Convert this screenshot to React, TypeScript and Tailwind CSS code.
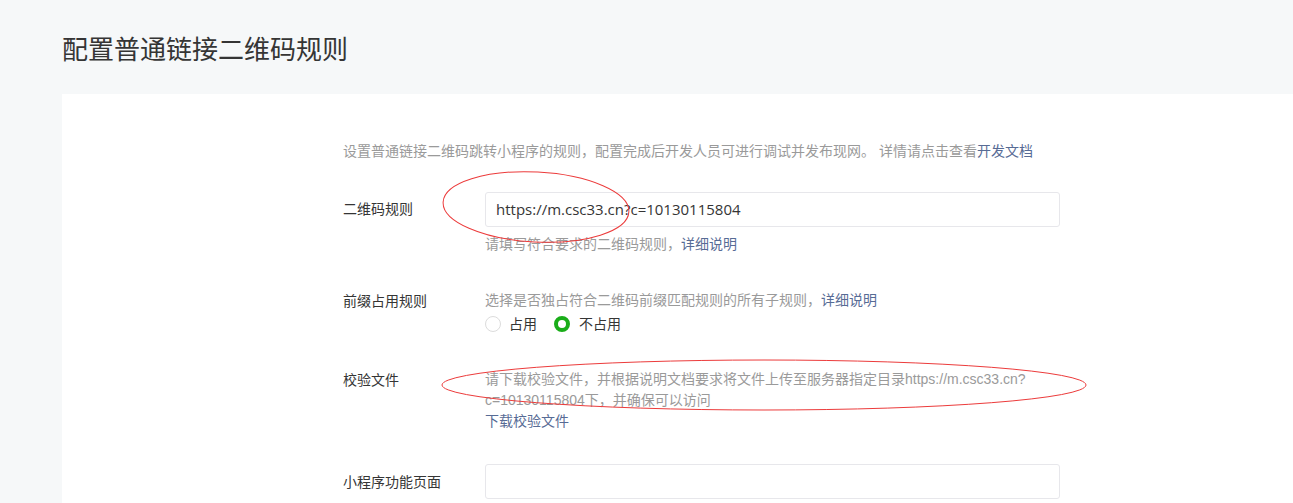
export default function App() {
  const font = { fontFamily: '"Liberation Sans", "Noto Sans CJK SC", sans-serif' };

  return (
    <div className="relative min-h-[503px] w-full overflow-hidden bg-[#f6f8f9]" style={font}>
      <h1 className="pl-[62px] pt-[32px] text-[26px] font-normal leading-[36px] text-[#353535]">
        配置普通链接二维码规则
      </h1>

      <div className="ml-[62px] mt-[26px] min-h-[420px] bg-white pl-[281px] pt-[47px] text-[14px]">
        <p className="leading-[20px] text-[#9a9a9a]">
          设置普通链接二维码跳转小程序的规则，配置完成后开发人员可进行调试并发布现网。 详情请点击查看
          <a className="text-[#576b95]">开发文档</a>
        </p>

        {/* 二维码规则 */}
        <div className="mt-[31px] flex">
          <label className="w-[142px] shrink-0 leading-[35px] text-[#353535]">二维码规则</label>
          <div>
            <div
              className="flex h-[35px] w-[575px] items-center rounded-[3px] border border-[#e7e7eb] px-[10px] text-[15px] text-[#353535]"
              style={{ fontFamily: '"Open Sans", sans-serif' }}
            >
              https://m.csc33.cn?c=10130115804
            </div>
            <p className="mt-[7px] leading-[20px] text-[#9a9a9a]">
              请填写符合要求的二维码规则，<a className="text-[#576b95]">详细说明</a>
            </p>
          </div>
        </div>

        {/* 前缀占用规则 */}
        <div className="mt-[36px] flex">
          <label className="w-[142px] shrink-0 pt-[1px] leading-[20px] text-[#353535]">前缀占用规则</label>
          <div>
            <p className="leading-[20px] text-[#9a9a9a]">
              选择是否独占符合二维码前缀匹配规则的所有子规则，<a className="text-[#576b95]">详细说明</a>
            </p>
            <div className="mt-[4px] flex items-center leading-[20px] text-[#353535]">
              <span className="h-[16px] w-[16px] rounded-full border border-[#dcdcdc]" />
              <span className="ml-[8px]">占用</span>
              <span className="ml-[17px] h-[16px] w-[16px] rounded-full border-[4px] border-[#1aad19]" />
              <span className="ml-[9px]">不占用</span>
            </div>
          </div>
        </div>

        {/* 校验文件 */}
        <div className="mt-[35px] flex">
          <label className="w-[142px] shrink-0 pt-[1px] leading-[21px] text-[#353535]">校验文件</label>
          <div className="leading-[21px]">
            <p className="text-[#9a9a9a]">
              请下载校验文件，并根据说明文档要求将文件上传至服务器指定目录https://m.csc33.cn?
              <br />
              c=10130115804下，并确保可以访问
            </p>
            <a className="text-[#576b95]">下载校验文件</a>
          </div>
        </div>

        {/* 小程序功能页面 */}
        <div className="mt-[32px] flex">
          <label className="w-[142px] shrink-0 pt-[1px] leading-[35px] text-[#353535]">小程序功能页面</label>
          <div className="h-[35px] w-[575px] rounded-[3px] border border-[#e7e7eb]" />
        </div>
      </div>

      {/* hand-drawn annotation marks */}
      <svg className="pointer-events-none absolute left-0 top-0" width="1293" height="503">
        <ellipse cx="536" cy="207" rx="93" ry="35" fill="none" stroke="#ec3b3b" strokeWidth="1" transform="rotate(3 536 207)" />
        <ellipse cx="764" cy="385" rx="322" ry="25" fill="none" stroke="#ec3b3b" strokeWidth="1" />
      </svg>
    </div>
  );
}
